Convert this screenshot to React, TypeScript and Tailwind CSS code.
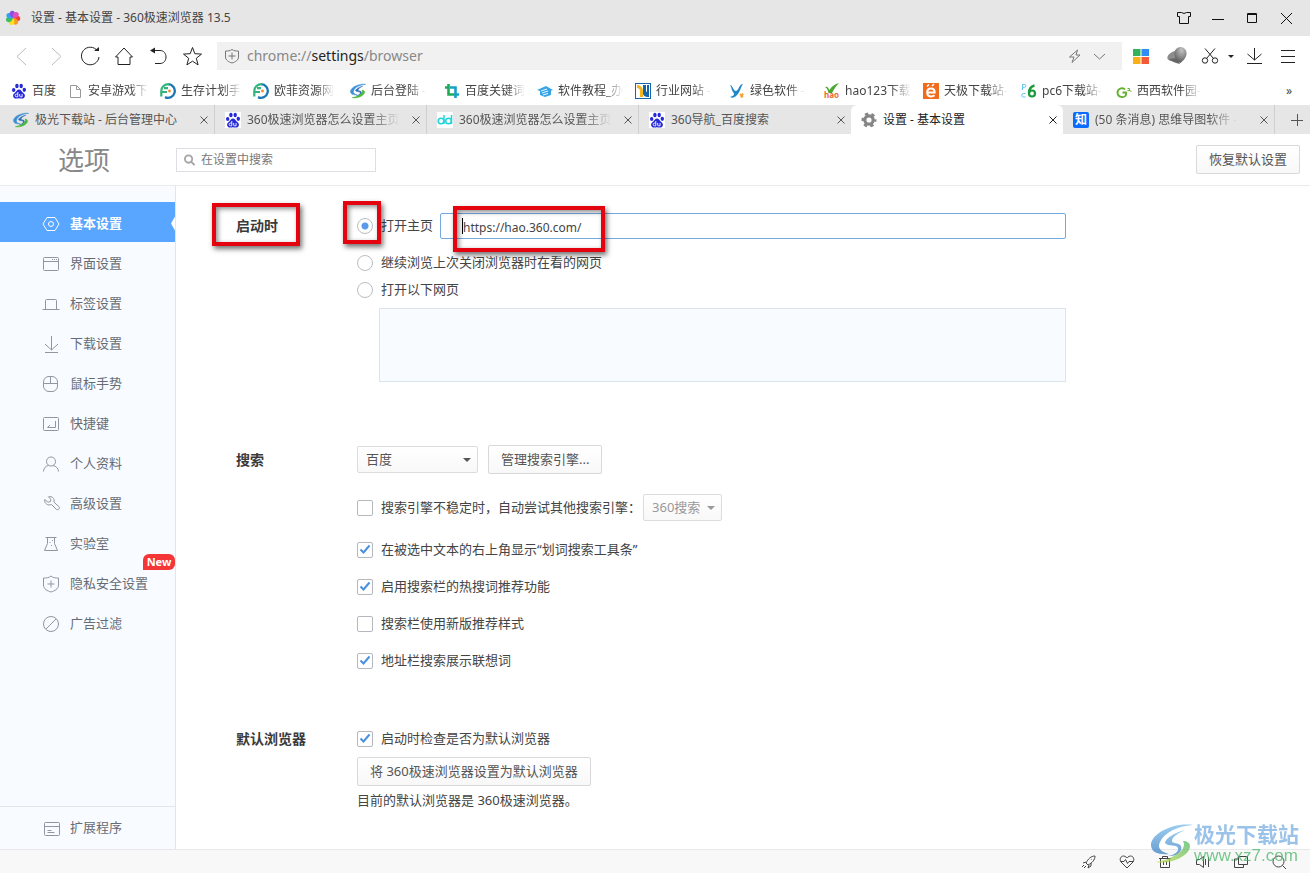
import { useState, type ReactNode } from 'react';

const SWOOSH_OUTER = 'M42 1C22-2 0 10 0 21c0 8 9 10 18 9-8-2-12-6-9-12C13 9 26 2 42 1z';
const SWOOSH_INNER = 'M34 6C22 9 14 15 14 19c4 4 11 1 13 5 1 4-4 7-10 8 9 1 15-5 13-10-2-4-9-2-9-5 0-4 6-8 13-11z';
const SWOOSH_BASE = 'M5 38c14 3 34-6 34-16 0-3-3-5-7-5 3 5-1 11-9 15-5 3-11 5-18 6z';

function Line({ children, size = 18 }: { children: ReactNode; size?: number }) {
  return (
    <svg width={size} height={size} viewBox={`0 0 ${size} ${size}`} fill="none" stroke="currentColor" className="shrink-0" aria-hidden="true">
      {children}
    </svg>
  );
}

function Fav({ children }: { children: ReactNode }) {
  return (
    <svg width="16" height="16" viewBox="0 0 16 16" className="shrink-0" aria-hidden="true">
      {children}
    </svg>
  );
}

// ---- site icons ----
const Baidu = () => (
  <Fav>
    <rect width="16" height="16" fill="#fff" />
    <g fill="#2529d8">
      <ellipse cx="2.7" cy="7" rx="1.7" ry="2.1" />
      <ellipse cx="5.9" cy="3" rx="1.7" ry="2.3" />
      <ellipse cx="10.2" cy="3" rx="1.7" ry="2.3" />
      <ellipse cx="13.3" cy="6.8" rx="1.7" ry="2.1" />
      <path d="M8 6.5c2 0 2.600 2 4 3.200 1.700 1.400 2.400 2.600 1.600 4.300-.8 1.900-2.900 1.600-5.600 1.300-2.700.3-4.800.6-5.600-1.300-.8-1.700-.1-2.900 1.600-4.300C5.400 8.500 6 6.500 8 6.500z" />
    </g>
    <path d="M6.800 9v4.800H5.500a1.300 1.300 0 0 1 0-2.700h1.300M8.700 11v2c0 .5.300.8.800.8h1.600V11" fill="none" stroke="#fff" strokeWidth="0.900" />
  </Fav>
);

const PageFile = () => (
  <Fav>
    <path d="M3.500 2.500h6l4 4v8h-10zM9.500 2.500v4h4" fill="none" stroke="#999" />
  </Fav>
);

const Ring = () => (
  <Fav>
    <path d="M8 1.200a6.800 6.800 0 1 1-3 12.900" fill="none" stroke="#1c78b4" strokeWidth="2.300" />
    <path d="M9 1.200C4.500 1 1.300 4 1.300 8v5.500M1.300 9H7M4 5.200h4" fill="none" stroke="#33b47c" strokeWidth="2.200" />
    <circle cx="9.500" cy="8" r="1.400" fill="#f08a2c" />
  </Fav>
);

const Swoosh = () => (
  <Fav>
    <g transform="translate(0.500 1) scale(.36)" strokeWidth="1.500">
      <path d={SWOOSH_OUTER} fill="#3a8fd6" stroke="#3a8fd6" />
      <path d={SWOOSH_INNER} fill="#2f6fb8" stroke="#2f6fb8" />
      <path d={SWOOSH_BASE} fill="#4cb83c" stroke="#4cb83c" />
    </g>
  </Fav>
);

const Crop = () => (
  <Fav>
    <path d="M4.500 1v10.500H10M1 4.500h3" fill="none" stroke="#1cab54" strokeWidth="2.600" />
    <path d="M6 4.500h5.500V15M10 11.500h5" fill="none" stroke="#17a1c9" strokeWidth="2.600" />
  </Fav>
);

const House = () => (
  <Fav>
    <path d="M0 7l9-4 7 4-2 .8V12l-6 2-5-2V8z" fill="#35a5e6" />
    <path d="M4 8l6-2M5 10l6-2M6 12l5-1.500" stroke="#fff" strokeWidth="0.900" />
  </Fav>
);

const Industry = () => (
  <Fav>
    <rect x="0.500" y="0.500" width="15" height="15" fill="#fff" stroke="#1764a8" />
    <path d="M2 2c4 0 6 3 6 7v5H5V9C5 6 4 5 2 5z" fill="#f6b51a" />
    <path d="M8 2v8c0 3 2 4 6 4V2h-2v7c-1 0-1-1-1-2V2z" fill="#1764a8" />
  </Fav>
);

const Yy = () => (
  <Fav>
    <path d="M1 2c3 0 3 6 6 6 3-.5 3-7 7-7-2 2-3 9-7 12-2 2-4 2-6 1 4-1 5-3 3-5C2 7 3 4 1 2z" fill="#2088c9" />
    <path d="M11 11l3 3M14 10.500l-2 4" stroke="#f3a32c" strokeWidth="1.800" />
  </Fav>
);

const Hao = () => (
  <Fav>
    <path d="M1 4c2-1 3 0 4.500 3C8 3 11 1 15 0c-3 3-5 6-7 10H4.500C4 7 3 5 1 4z" fill="#4aa832" />
    <text x="0" y="15" fontSize="8" fontWeight="bold" fontFamily="Noto Sans" fill="#ee6a33">hao</text>
  </Fav>
);

const Yesky = () => (
  <Fav>
    <rect width="16" height="16" fill="#f26a1b" />
    <path d="M4.500 9.500h7.200c0-2.500-1.300-4-3.700-4-2.300 0-3.800 1.700-3.800 4 0 2.500 1.600 4 4 4 1.400 0 2.500-.4 3.300-1.200" fill="none" stroke="#fff" strokeWidth="2" />
    <path d="M4 3.500l2-2M9 3l2-2" stroke="#fff" strokeWidth="1.500" />
  </Fav>
);

const Pc6 = () => (
  <Fav>
    <path d="M1.500 7V1.500h2a1.300 1.300 0 0 1 0 2.800h-2M4.500 10.500h-2a1.500 1.500 0 0 0 0 3.500h2" fill="none" stroke="#63c5ea" />
    <path d="M13.500 2.500C9.500 3.500 8 6 8 10" fill="none" stroke="#1a9a3c" strokeWidth="2.400" />
    <circle cx="11" cy="10.500" r="3" fill="none" stroke="#1a9a3c" strokeWidth="2.200" />
  </Fav>
);

const Cr = () => (
  <Fav>
    <path d="M9 6.500C7.500 4.500 2 4.500 1.500 9.500c0 5 7 6 8.500 2.500V9.500H6.500" fill="none" stroke="#62b02e" strokeWidth="1.900" />
    <path d="M11.500 5.500h2v2h-2M13.500 7.500l2 1" fill="none" stroke="#62b02e" />
  </Fav>
);

const Dd = () => (
  <Fav>
    <rect width="16" height="16" fill="#fff" />
    <g fill="none" stroke="#20d3da" strokeWidth="1.500">
      <circle cx="4" cy="9" r="2.800" />
      <circle cx="11.500" cy="9" r="2.800" />
      <path d="M7 3v9M14.500 3v9" />
    </g>
  </Fav>
);

const Gear = () => (
  <Fav>
    <circle cx="8" cy="8" r="4.200" fill="none" stroke="#858585" strokeWidth="3.200" />
    <circle cx="8" cy="8" r="6.300" fill="none" stroke="#858585" strokeWidth="2.400" strokeDasharray="3.300 3.300" strokeDashoffset="1.600" />
  </Fav>
);

const Zhihu = () => (
  <span className="flex size-4 shrink-0 items-center justify-center rounded-xs bg-[#0a6cff] text-xs font-bold text-white">知</span>
);

const petals = ['#f0403a', '#fb9a1e', '#fbe21c', '#3cc05a', '#36a0f0', '#8a4fe0', '#e04fc0'];

const Pinwheel = () => (
  <Fav>
    {petals.map((c, i) => (
      <path key={c} d="M8 8C6 4.500 7.500 1 10.500 1.200 14 2 13.500 6 8 8z" fill={c} transform={`rotate(${i * 51 + 70} 8 8)`} />
    ))}
  </Fav>
);

const bookmarks = [
  { name: '百度', icon: <Baidu /> },
  { name: '安卓游戏下', icon: <PageFile /> },
  { name: '生存计划手', icon: <Ring /> },
  { name: '欧菲资源网', icon: <Ring /> },
  { name: '后台登陆 -', icon: <Swoosh /> },
  { name: '百度关键词', icon: <Crop /> },
  { name: '软件教程_办', icon: <House /> },
  { name: '行业网站 -', icon: <Industry /> },
  { name: '绿色软件 -', icon: <Yy /> },
  { name: 'hao123下载', icon: <Hao /> },
  { name: '天极下载站-', icon: <Yesky /> },
  { name: 'pc6下载站-', icon: <Pc6 /> },
  { name: '西西软件园-', icon: <Cr /> },
];

const tabs = [
  { title: '极光下载站 - 后台管理中心', icon: <Swoosh /> },
  { title: '360极速浏览器怎么设置主页', icon: <Baidu />, long: true },
  { title: '360极速浏览器怎么设置主页', icon: <Dd />, long: true },
  { title: '360导航_百度搜索', icon: <Baidu /> },
  { title: '设置 - 基本设置', icon: <Gear /> },
  { title: '(50 条消息) 思维导图软件 -', icon: <Zhihu />, long: true },
];

const menu = [
  { name: '基本设置', icon: <><path d="M5 2.500h8l4 6.500-4 6.500H5L1 9z" /><circle cx="9" cy="9" r="2.500" /></> },
  { name: '界面设置', icon: <><rect x="1.500" y="2.500" width="15" height="13" rx="1" /><path d="M1.500 6.500h15M10 4.500h1M12 4.500h1M14 4.500h1" /></> },
  { name: '标签设置', icon: <path d="M.5 14.500h17M3.500 14.500v-9q0-1 1-1h9q1 0 1 1v9" /> },
  { name: '下载设置', icon: <path d="M9.500 1v14M3 9l6.500 6L16 9M3 17.500h13" /> },
  { name: '鼠标手势', icon: <><rect x="1.500" y="1.500" width="14" height="15" rx="5.500" /><path d="M1.500 8.500h14M8.500 1.500v7" /></> },
  { name: '快捷键', icon: <><rect x="1.500" y="2.500" width="15" height="13" rx="1" /><path d="M13.500 6v6.500h-8M8 10l-2.500 2.500" /></> },
  { name: '个人资料', icon: <><circle cx="9" cy="6.500" r="4.500" /><path d="M1.500 16.500c0-3 2-5.500 5-6M11 10.500c3 .5 5.500 3 5.500 6" /></> },
  { name: '高级设置', icon: <path d="M6.500 1.800c3.500-1 6.500 1.700 5.300 5.200l5 4.500c1.700 1.800-.6 4.300-2.600 2.700l-4.700-4.700C6 11 2 8.500 2.700 4.500l3.300 2.700 2.500-.7.300-2.300z" /> },
  { name: '实验室', icon: <><path d="M3.500 2.500h11M5.500 2.500v6l-3 7h13l-3-7v-6" /><path d="M7.500 7.500h1M10 5.500h1M9 10.500h1" /></> },
  { name: '隐私安全设置', icon: <><path d="M9 1c2 2 5 2 7.500 2v7c0 4-4 6-7.500 7-3.500-1-7.500-3-7.500-7V3C4 3 7 3 9 1z" /><path d="M9 5.500v7M5.500 9h7" /></> },
  { name: '广告过滤', icon: <><circle cx="9" cy="9" r="7.500" /><path d="M4 14L14 4" /></> },
];

const statusIcons = [
  { name: '加速', icon: <path d="M5 9c2-4 5-7 9-7 0 4-3 7-7 9zM5 8l-3 1M8 11l-1 3 3-2V9M3 11l-2 2M5 12l-2 2M10 5.500h.5" /> },
  { name: '健康', icon: <path d="M8 14L2 8C0 5 2 2 4.500 2 6.500 2 8 4 8 4s1.500-2 3.500-2C14 2 16 5 14 8zM2 7.500h3l1.500-2 2 4 1.500-2h4" /> },
  { name: '清理', icon: <path d="M3.500 4.500h9v9h-9zM2 4.500h12M5.500 4.500v-2h5v2M6.500 7v4M9.500 7v4" /> },
  { name: '声音', icon: <path d="M1.500 5.500h3l4-3v11l-4-3h-3zM10.500 5v6M13.500 3v10" /> },
  { name: '窗口', icon: <path d="M5.500 2.500h9v8h-9zM5.500 5h-4v8.500h9v-3" /> },
  { name: '缩放', icon: <><circle cx="7.500" cy="7.500" r="5.500" /><path d="M11.500 11.500L15 15" /></> },
];

// red marker drawn over the parts of the page that are called out
function Marker({ className }: { className: string }) {
  return (
    <span className={`pointer-events-none absolute z-10 border-4 border-[#e3040f] shadow-[2px_3px_5px_rgba(0,0,0,0.55),inset_2px_2px_5px_rgba(0,0,0,0.45)] ${className}`} />
  );
}

function Check({ label, defaultChecked = false }: { label: string; defaultChecked?: boolean }) {
  return (
    <label className="flex items-center gap-2">
      <span className="relative size-4">
        <input type="checkbox" defaultChecked={defaultChecked} className="peer block size-4 appearance-none rounded-xs border border-[#b4b9c0] bg-white" />
        <svg viewBox="0 0 16 16" className="pointer-events-none absolute inset-0 hidden size-4 peer-checked:block" fill="none" stroke="#4a90e2" strokeWidth="2">
          <path d="M3.500 7.500l3 3 6-7" />
        </svg>
      </span>
      {label}
    </label>
  );
}

function Radio({ label, checked, onChange }: { label: string; checked: boolean; onChange: () => void }) {
  return (
    <label className="flex shrink-0 items-center gap-2">
      <input
        type="radio"
        name="startup"
        checked={checked}
        onChange={onChange}
        className="block size-4 appearance-none rounded-full border border-[#b9bdc3] bg-white checked:bg-[radial-gradient(circle,#5a9bea_3px,#fff_4px)]"
      />
      {label}
    </label>
  );
}

function Select({ label, options, disabled, className }: { label: string; options: string[]; disabled?: boolean; className: string }) {
  return (
    <span className={`relative ${disabled ? 'text-[#999]' : 'text-[#555]'}`}>
      <select
        aria-label={label}
        disabled={disabled}
        className={`block h-[27px] appearance-none rounded-xs border border-[#dcdcdc] bg-linear-to-b from-white to-[#f8f8f8] pl-2 ${className}`}
      >
        {options.map((o) => <option key={o}>{o}</option>)}
      </select>
      <svg width="8" height="4" viewBox="0 0 8 4" fill="currentColor" className="pointer-events-none absolute top-3 right-[7px]"><path d="M0 0h8L4 4z" /></svg>
    </span>
  );
}

const button = 'h-[29px] rounded-xs border border-[#d9d9d9] bg-linear-to-b from-white to-[#f8f8f8] px-3 text-[#555]';
const sectionTitle = 'relative flex items-center text-sm font-bold text-[#3a3a3a]';

function App() {
  const [active, setActive] = useState(0);
  const [startup, setStartup] = useState(0);
  const [homePage, setHomePage] = useState('https://hao.360.com/');

  return (
    <div className="relative flex min-h-screen flex-col overflow-hidden bg-white font-['Noto_Sans','Noto_Sans_CJK_SC',sans-serif] text-[13px] text-[#444]">
      {/* title bar */}
      <header className="flex h-9 items-center bg-[#e6e6e6] pr-[7px] pl-[5px] text-xs text-[#444]">
        <Pinwheel />
        <span className="ml-[10px] flex-1">设置 - 基本设置 - 360极速浏览器 13.5</span>
        <div className="flex text-[#111]">
          <button aria-label="皮肤" className="flex w-[34px] justify-center">
            <Line size={16}><path d="M5.500 2.500q2.500 2 5 0h4v4h-2v7h-9v-7h-2v-4z" /></Line>
          </button>
          <button aria-label="最小化" className="flex w-[34px] justify-center">
            <Line size={16}><path d="M2 9.500h12" /></Line>
          </button>
          <button aria-label="最大化" className="flex w-[34px] justify-center">
            <Line size={16}><path d="M3.500 3.500h9v9h-9zM3 4.500h10" /></Line>
          </button>
          <button aria-label="关闭" className="flex w-[34px] justify-center">
            <Line size={16}><path d="M3 3l11 11M14 3L3 14" /></Line>
          </button>
        </div>
      </header>

      {/* toolbar */}
      <div className="flex h-10 items-center pr-[6px] pl-[5px] text-[#222]">
        <button aria-label="后退" className="flex w-[34px] justify-center text-[#bbb]">
          <Line size={20}><path d="M14 2L5 10.500l9 8.500" /></Line>
        </button>
        <button aria-label="前进" className="flex w-[34px] justify-center text-[#bbb]">
          <Line size={20}><path d="M6 2l9 8.500L6 19" /></Line>
        </button>
        <button aria-label="刷新" className="flex w-[34px] justify-center">
          <Line size={20}><path d="M17.500 5A8.800 8.800 0 1 0 19 11" /><path d="M14 5h5V1z" fill="currentColor" stroke="none" /></Line>
        </button>
        <button aria-label="主页" className="flex w-[34px] justify-center">
          <Line size={20}><path d="M1.500 11L10 2l8.500 9H16v7.500H4V11z" /></Line>
        </button>
        <button aria-label="恢复" className="flex w-[34px] justify-center">
          <Line size={20}><path d="M4 4.500h8c8 0 8 13 0 13H7" /><path d="M2 4.500L7 1.500v6z" fill="currentColor" stroke="none" /></Line>
        </button>
        <button aria-label="收藏" className="flex w-[34px] justify-center">
          <Line size={20}><path d="M10.500 1.500l2.300 6.200 6.700.4-5.200 4.200 1.800 6.600-5.600-3.700-5.600 3.700 1.800-6.600L1.500 8.100l6.700-.4z" /></Line>
        </button>
        <div className="ml-2 flex h-7 flex-1 items-center bg-[#f1f1f1] pr-3 pl-[7px] text-[#777]">
          <Line size={16}><path d="M8 1.500c2 1.500 4 1.500 6.500 1.500v6c0 3-3 5-6.500 6-3.500-1-6.500-3-6.500-6V3C4 3 6 3 8 1.500zM8 4.500v7M4.500 8h7" /></Line>
          <div role="textbox" aria-label="地址" contentEditable suppressContentEditableWarning className="ml-[7px] flex-1 text-sm text-[#888] outline-none">
            chrome://<span className="text-[#222]">settings</span>/browser
          </div>
          <button aria-label="极速模式" className="flex w-[30px] justify-center">
            <Line size={16}><path d="M10.500 2l-8 7H7l-2 5.500 8-7.500H9z" /></Line>
          </button>
          <button aria-label="展开" className="flex w-[20px] justify-center">
            <Line size={16}><path d="M2 6l5.500 5L13 6" /></Line>
          </button>
        </div>
        <button aria-label="应用" className="flex w-[38px] justify-center">
          <Fav>
            <path d="M0 1h7.500v7H0z" fill="#32b35b" />
            <path d="M8.500 1H16v7H8.500z" fill="#2f8df5" />
            <path d="M0 9h7.500v7H0z" fill="#fbb018" />
            <path d="M8.500 9H16v7H8.500z" fill="#f4593a" />
          </Fav>
        </button>
        <button aria-label="扩展" className="flex w-[34px] justify-center">
          <svg width="20" height="18" viewBox="0 0 20 18">
            <defs>
              <radialGradient id="ball" cx="0.600" cy="0.200" r="0.900">
                <stop offset="0" stopColor="#c4c4c4" />
                <stop offset="1" stopColor="#4c4c4c" />
              </radialGradient>
            </defs>
            <ellipse cx="7" cy="9" rx="7" ry="4.500" fill="#8d8d8d" transform="rotate(-25 7 9)" />
            <path d="M2 12c3 3 7 4 11 5l-3-6z" fill="#666" />
            <path d="M13.500 0a6 6 0 0 1 6 6.500c0 4-3 7-6 9.500-3-1-6-5-6-9.500a6 6 0 0 1 6-6.500z" fill="url(#ball)" />
          </svg>
        </button>
        <button aria-label="截图" className="flex w-[32px] justify-center">
          <Line size={18}><path d="M4 1.500l8.500 10M14 1.500l-8.500 10" /><circle cx="4" cy="13.500" r="2.700" /><circle cx="14" cy="13.500" r="2.700" /></Line>
        </button>
        <button aria-label="截图选项" className="flex w-[10px] justify-center">
          <svg width="6" height="3" viewBox="0 0 6 3"><path d="M0 0h6L3 3z" fill="#222" /></svg>
        </button>
        <button aria-label="下载" className="flex w-[36px] justify-center">
          <Line size={18}><path d="M9.500 1v12M2.500 7l7 6 7-6M2 16.500h15" /></Line>
        </button>
        <button aria-label="菜单" className="flex w-[32px] justify-center">
          <Line size={18}><path d="M2 3.500h14M2 9.500h14M2 15.500h14" /></Line>
        </button>
      </div>

      {/* bookmarks */}
      <nav className="flex h-[29px] items-center justify-between pr-[18px] pl-[11px] text-xs text-[#444]">
        <div className="grid grid-cols-[56px_93px_93px_97px_94px_93px_98px_94px_95px_99px_98px_95px_90px]">
          {bookmarks.map((b) => (
            <a key={b.name} href="#" className="flex items-center gap-[5px]">
              {b.icon}
              <span className={`whitespace-nowrap ${b.name.length > 2 ? '[mask-image:linear-gradient(to_right,#000_70%,transparent)]' : ''}`}>{b.name}</span>
            </a>
          ))}
        </div>
        <button aria-label="更多书签">»</button>
      </nav>

      {/* tabs */}
      <div className="flex h-[29px] bg-[#e6e6e6] pl-[3px] text-xs text-[#555]">
        {tabs.map((t, i) => (
          <div
            key={i}
            className={`flex w-[212px] min-w-0 items-center gap-[6px] pt-px pr-[6px] pl-[10px] ${i === 4 ? 'rounded-t-md bg-white text-[#222]' : i === 3 ? '' : 'border-r border-[#cfcfcf]'}`}
          >
            {t.icon}
            <span className={`whitespace-nowrap ${t.long ? '[mask-image:linear-gradient(to_right,#000_80%,transparent)]' : ''}`}>{t.title}</span>
            <button aria-label="关闭标签页" className="ml-auto shrink-0">
              <Line size={8}><path d="M.5.5l7 7M7.500.5l-7 7" /></Line>
            </button>
          </div>
        ))}
        <button aria-label="新标签页" className="ml-auto flex w-[26px] items-center justify-center">
          <Line size={12}><path d="M6.500 0v12M0 6.500h12" /></Line>
        </button>
      </div>

      {/* page header */}
      <div className="flex h-[52px] items-center border-b border-[#e8ecef] pr-[10px]">
        <h1 className="w-44 pl-[58px] text-[26px] leading-8 text-[#888]">选项</h1>
        <label className="flex h-6 w-[200px] items-center gap-[6px] border border-[#dcdfe3] pl-[7px]">
          <svg width="12" height="12" viewBox="0 0 12 12" fill="none" stroke="#a5a5a5" strokeWidth="2">
            <circle cx="5" cy="5" r="4" />
            <path d="M8 8l3.500 3.500" />
          </svg>
          <input type="text" aria-label="在设置中搜索" placeholder="在设置中搜索" className="w-full min-w-0 text-xs outline-none placeholder:text-[#777]" />
        </label>
        <button className={`${button} ml-auto`}>恢复默认设置</button>
      </div>

      <div className="flex flex-1">
        {/* sidebar */}
        <aside className="flex w-44 shrink-0 flex-col border-r border-[#e0e6ec] bg-[#f8fbff] pt-4 text-[#666c76]">
          {menu.map((m, i) => (
            <button
              key={m.name}
              onClick={() => setActive(i)}
              className={`relative flex h-10 items-center gap-[10px] pt-[3px] pl-[42px] ${active === i ? 'bg-[#58a6ff] font-bold text-white' : ''}`}
            >
              <span className={active === i ? '' : 'text-[#9097a0]'}><Line>{m.icon}</Line></span>
              {m.name}
              {active === i && <span className="absolute right-0 h-[14px] w-[4px] bg-white [clip-path:polygon(100%_0,0_50%,100%_100%)]" />}
              {m.name === '隐私安全设置' && (
                <span className="absolute top-[-8px] right-0 flex h-4 w-8 items-center justify-center rounded-md rounded-bl-none bg-[#f53638] text-[11px] font-bold text-white">New</span>
              )}
            </button>
          ))}
          <a href="#" className="mt-auto flex h-[43px] items-center gap-[10px] border-t border-[#e0e6ec] pl-[42px]">
            <span className="text-[#9097a0]"><Line><rect x="2.500" y="3.500" width="15" height="13" rx="1" /><path d="M2.500 7.500h15M5.500 11.500h4M5.500 13.500h7" /></Line></span>
            扩展程序
          </a>
        </aside>

        <main className="min-w-0 flex-1 pt-6 pl-[60px]">
          <section className="grid max-w-[830px] grid-cols-[121px_1fr]">
            <h2 className={`${sectionTitle} h-8`}>
              启动时
              <Marker className="top-[-7px] left-[-24px] h-[43px] w-[88px]" />
            </h2>
            <div>
              <div className="relative flex h-8 items-center gap-[7px]">
                <Radio label="打开主页" checked={startup === 0} onChange={() => setStartup(0)} />
                <Marker className="top-[-9px] left-[-14px] h-[43px] w-[38px]" />
                <div className="relative flex-1">
                  <input
                    type="text"
                    aria-label="主页地址"
                    value={homePage}
                    onChange={(e) => setHomePage(e.target.value)}
                    className="block h-[26px] w-full rounded-xs border border-[#74a9e0] pt-[2px] pl-[22px] text-xs text-[#444] outline-none"
                  />
                  <span className="absolute top-[5px] left-[22px] h-4 w-px bg-black" />
                  <Marker className="top-[-7px] left-[13px] h-[46px] w-[152px]" />
                </div>
              </div>
              <div className="mt-[7px] flex h-[27px] items-center">
                <Radio label="继续浏览上次关闭浏览器时在看的网页" checked={startup === 1} onChange={() => setStartup(1)} />
              </div>
              <div className="flex h-[27px] items-center">
                <Radio label="打开以下网页" checked={startup === 2} onChange={() => setStartup(2)} />
              </div>
              <div className="mt-[5px] pl-[22px]">
                <textarea aria-label="启动时打开的网页" className="block h-[74px] w-full resize-none border border-[#dbe3ec] bg-[#f8fbff] outline-none" />
              </div>
            </div>
          </section>

          <section className="mt-[63px] grid max-w-[830px] grid-cols-[121px_1fr]">
            <h2 className={`${sectionTitle} h-[29px]`}>搜索</h2>
            <div>
              <div className="flex items-center gap-[10px]">
                <Select label="默认搜索引擎" options={['百度', '360搜索']} className="w-[121px]" />
                <button className={button}>管理搜索引擎...</button>
              </div>
              <div className="mt-5 flex items-center gap-[2px]">
                <Check label="搜索引擎不稳定时，自动尝试其他搜索引擎：" />
                <Select label="备用搜索引擎" options={['360搜索']} disabled className="w-[79px]" />
              </div>
              <div className="mt-[10px] grid auto-rows-[37px] items-center">
                <Check label="在被选中文本的右上角显示“划词搜索工具条”" defaultChecked />
                <Check label="启用搜索栏的热搜词推荐功能" defaultChecked />
                <Check label="搜索栏使用新版推荐样式" />
                <Check label="地址栏搜索展示联想词" defaultChecked />
              </div>
            </div>
          </section>

          <section className="mt-12 grid max-w-[830px] grid-cols-[121px_1fr]">
            <h2 className={`${sectionTitle} h-6`}>默认浏览器</h2>
            <div>
              <div className="flex h-6 items-center">
                <Check label="启动时检查是否为默认浏览器" defaultChecked />
              </div>
              <button className={`${button} mt-[6px] block`}>将 360极速浏览器设置为默认浏览器</button>
              <p className="mt-[2px] leading-6">目前的默认浏览器是 360极速浏览器。</p>
            </div>
          </section>
        </main>
      </div>

      {/* status bar */}
      <footer className="flex h-6 items-center justify-end border-t border-[#e8e8e8] bg-[#f8f8f8] pr-3 text-[#444]">
        {statusIcons.map((s) => (
          <button key={s.name} aria-label={s.name} className="flex w-[38px] justify-center">
            <Line size={16}>{s.icon}</Line>
          </button>
        ))}
      </footer>

      {/* watermark */}
      <div className="pointer-events-none absolute right-[11px] bottom-[7px] flex items-center gap-px opacity-75">
        <svg width="42" height="40" viewBox="0 0 42 40">
          <defs>
            <linearGradient id="wmBlue" x1="0" y1="0" x2="0" y2="1">
              <stop offset="0" stopColor="#79bdea" />
              <stop offset="1" stopColor="#3a7fc4" />
            </linearGradient>
            <linearGradient id="wmGreen" x1="0" y1="1" x2="1" y2="0">
              <stop offset="0" stopColor="#c2dc4a" />
              <stop offset="1" stopColor="#4fb96a" />
            </linearGradient>
          </defs>
          <path d={SWOOSH_OUTER} fill="url(#wmBlue)" />
          <path d={SWOOSH_INNER} fill="url(#wmBlue)" />
          <path d={SWOOSH_BASE} fill="url(#wmGreen)" />
        </svg>
        <div>
          <div className="text-[21px] leading-6 font-bold text-[#7ab0e2]">极光下载站</div>
          <div className="font-['Liberation_Sans',sans-serif] text-[17px] leading-5 text-[#4db56a]">www.xz7.com</div>
        </div>
      </div>
    </div>
  );
}

export default App;
